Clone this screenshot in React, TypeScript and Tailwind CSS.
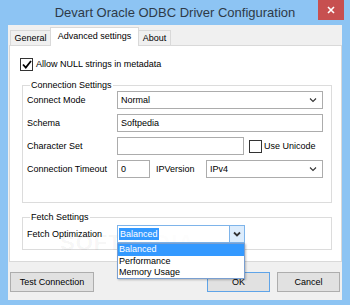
import React from "react";

const Chevron: React.FC<{ bold?: boolean }> = ({ bold }) => (
  <svg width="8" height="6" viewBox="0 0 8 6">
    <polyline
      points="1,1.5 4,4.5 7,1.5"
      fill="none"
      stroke="#333"
      strokeWidth={bold ? 1.8 : 1.1}
    />
  </svg>
);

const Check: React.FC<{ checked?: boolean }> = ({ checked }) => (
  <div className="w-[13px] h-[13px] border border-[#333] bg-white flex items-center justify-center shrink-0">
    {checked && (
      <svg width="10" height="9" viewBox="0 0 10 9">
        <polyline points="1,4.5 3.8,7.5 9,1" fill="none" stroke="#000" strokeWidth="1.8" />
      </svg>
    )}
  </div>
);

const Select: React.FC<{ value: string; className?: string }> = ({ value, className }) => (
  <div
    className={`h-[18px] border border-[#acacac] bg-white flex items-center justify-between pl-[3px] pr-[5px] ${className ?? ""}`}
  >
    <span>{value}</span>
    <Chevron />
  </div>
);

const Input: React.FC<{ value?: string; className?: string }> = ({ value, className }) => (
  <div className={`h-[18px] border border-[#acacac] bg-white flex items-center pl-[3px] ${className ?? ""}`}>
    {value}
  </div>
);

const Row: React.FC<{ label: string; children: React.ReactNode }> = ({ label, children }) => (
  <div className="flex items-center h-[18px]">
    <span className="w-[90px] shrink-0">{label}</span>
    {children}
  </div>
);

export default function App() {
  return (
    <div className="relative w-[350px] h-[305px] bg-[#8dc4f3] text-[9px] leading-[11px] text-black font-['Liberation_Sans',Arial,sans-serif] overflow-hidden">
      {/* title bar */}
      <div className="h-[25px] flex items-center justify-center text-[13px] text-[#2e3a48] pb-[1px]">
        Devart Oracle ODBC Driver Configuration
      </div>
      <div className="absolute right-[6px] top-0 w-[26px] h-[20px] bg-[#c75050] flex items-center justify-center">
        <svg width="8" height="8" viewBox="0 0 8 8">
          <path d="M1 1 L7 7 M7 1 L1 7" stroke="#fff" strokeWidth="1.6" />
        </svg>
      </div>

      {/* client */}
      <div className="ml-[8px] w-[334px] h-[275px] bg-[#f0f0f0] flex flex-col">
        {/* tabs */}
        <div className="flex items-end h-[20px] pl-[2px]">
          <div className="h-[15px] w-[41px] border border-b-0 border-[#d9d9d9] bg-[#f0f0f0] flex items-center justify-center">
            General
          </div>
          <div className="relative z-10 -ml-px -mb-px h-[19px] w-[89px] border border-b-0 border-[#d9d9d9] bg-white flex items-center justify-center pb-[2px]">
            Advanced settings
          </div>
          <div className="-ml-px h-[15px] w-[33px] border border-b-0 border-[#d9d9d9] bg-[#f0f0f0] flex items-center justify-center">
            About
          </div>
        </div>

        {/* panel */}
        <div className="relative ml-[1px] w-[333px] h-[217px] border border-[#d9d9d9] bg-white flex flex-col pl-[10px]">
          <div className="absolute left-[50px] top-[186px] text-[22px] leading-[22px] font-bold tracking-[1px] text-[rgba(0,0,0,0.05)] pointer-events-none">
            SOFTPEDIA
          </div>

          <div className="flex items-center gap-[3px] mt-[12px] h-[13px]">
            <Check checked />
            <span>Allow NULL strings in metadata</span>
          </div>

          <fieldset className="mt-[9px] ml-[2px] w-[310px] border border-[#dcdcdc] pl-[4px] pr-[8px] pb-[24px] flex flex-col gap-[5px]">
            <legend className="ml-[3px] px-[1px]">Connection Settings</legend>
            <Row label="Connect Mode">
              <Select value="Normal" className="flex-1" />
            </Row>
            <Row label="Schema">
              <Input value="Softpedia" className="flex-1" />
            </Row>
            <Row label="Character Set">
              <Input className="w-[127px]" />
              <div className="ml-[5px] flex items-center gap-[2px]">
                <Check />
                <span>Use Unicode</span>
              </div>
            </Row>
            <Row label="Connection Timeout">
              <Input value="0" className="w-[33px]" />
              <span className="ml-[6px] w-[50px]">IPVersion</span>
              <Select value="IPv4" className="flex-1" />
            </Row>
          </fieldset>

          <fieldset className="mt-[9px] ml-[2px] w-[310px] border border-[#dcdcdc] pl-[4px] pr-[8px] pt-[2px] pb-[6px]">
            <legend className="ml-[3px] px-[1px]">Fetch Settings</legend>
            <Row label="Fetch Optimization">
              <div className="relative w-[128px] h-[18px] border border-[#7eb4ea] bg-white/70 flex items-center">
                <span className="ml-[1px] bg-[#3399ff] text-white px-[1px] leading-[12px]">Balanced</span>
                <div className="ml-auto h-full w-[15px] bg-[#dcecfc] border-l border-[#7eb4ea] flex items-center justify-center">
                  <Chevron bold />
                </div>
                <div className="absolute z-20 left-[-1px] top-[17px] w-[128px] border border-[#7a9fd0] bg-white flex flex-col leading-[11px] shadow-[1px_1px_2px_rgba(0,0,0,0.25)]">
                  <div className="bg-[#3399ff] text-white pl-[1px] h-[12px]">Balanced</div>
                  <div className="pl-[1px] h-[11px]">Performance</div>
                  <div className="pl-[1px] h-[11px]">Memory Usage</div>
                </div>
              </div>
            </Row>
          </fieldset>
        </div>

        {/* buttons */}
        <div className="flex items-center mt-[10px] pl-[2px] h-[20px]">
          <div className="w-[84px] h-[20px] border border-[#adadad] bg-[#e1e1e1] flex items-center justify-center">
            Test Connection
          </div>
          <div className="ml-auto w-[63px] h-[20px] border border-[#5fa4e8] bg-[#e1e1e1] flex items-center justify-center">
            OK
          </div>
          <div className="ml-[7px] mr-[2px] w-[63px] h-[20px] border border-[#adadad] bg-[#e1e1e1] flex items-center justify-center">
            Cancel
          </div>
        </div>
      </div>
    </div>
  );
}
